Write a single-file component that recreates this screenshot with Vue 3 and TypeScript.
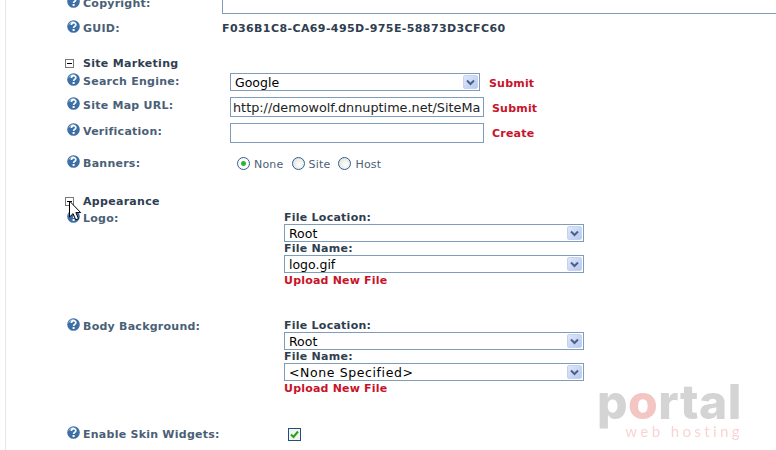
<template>
  <div class="page">
    <div class="settings">
      <div class="row row-copyright">
        <label class="label"><HelpIcon />Copyright:</label>
        <input class="text-box copyright-box" type="text" />
      </div>
      <div class="row row-guid">
        <label class="label"><HelpIcon />GUID:</label>
        <span class="guid">F036B1C8-CA69-495D-975E-58873D3CFC60</span>
      </div>

      <div class="section section-marketing">
        <span class="toggle"></span>
        <span class="section-title">Site Marketing</span>
      </div>
      <div class="row row-engine">
        <label class="label"><HelpIcon />Search Engine:</label>
        <div class="combo engine-combo">
          <select><option>Google</option></select>
          <span class="combo-arrow"><ArrowIcon /></span>
        </div>
        <a class="cmd cmd-engine">Submit</a>
      </div>
      <div class="row row-sitemap">
        <label class="label"><HelpIcon />Site Map URL:</label>
        <input class="text-box wide-box" type="text" value="http://demowolf.dnnuptime.net/SiteMap.aspx" />
        <a class="cmd">Submit</a>
      </div>
      <div class="row row-verify">
        <label class="label"><HelpIcon />Verification:</label>
        <input class="text-box wide-box" type="text" />
        <a class="cmd">Create</a>
      </div>
      <div class="row row-banners">
        <label class="label"><HelpIcon />Banners:</label>
        <div class="radios">
          <span v-for="b in banners" :key="b" class="radio-item">
            <span class="radio" :class="{ on: b === 'None' }"></span>{{ b }}
          </span>
        </div>
      </div>

      <div class="section section-appearance">
        <span class="toggle"></span>
        <span class="section-title">Appearance</span>
      </div>
      <div v-for="f in filePickers" :key="f.label" class="row file-row">
        <label class="label"><HelpIcon />{{ f.label }}</label>
        <div class="picker">
          <div class="picker-title">File Location:</div>
          <div class="combo file-combo">
            <select><option>Root</option></select>
            <span class="combo-arrow"><ArrowIcon /></span>
          </div>
          <div class="picker-title">File Name:</div>
          <div class="combo file-combo">
            <select :class="{ spaced: f.file !== 'logo.gif' }"><option>{{ f.file }}</option></select>
            <span class="combo-arrow"><ArrowIcon /></span>
          </div>
          <a class="cmd upload">Upload New File</a>
        </div>
      </div>
      <div class="row row-widgets">
        <label class="label"><HelpIcon />Enable Skin Widgets:</label>
        <span class="check">
          <svg width="9" height="9" viewBox="0 0 9 9"><path d="M1 4.5 3.5 7 8 1.5" fill="none" stroke="#21a121" stroke-width="2" /></svg>
        </span>
      </div>
    </div>

    <svg class="cursor" width="14" height="22" viewBox="0 0 14 22">
      <path d="M1.5 1v16l3.6-3.4 2.6 6.2 2.8-1.2-2.6-6h4.8z" fill="#fff" stroke="#000" stroke-width="1" />
    </svg>

    <div class="watermark">
      <div class="wm-name">p<span class="wm-o">o</span>rtal</div>
      <div class="wm-sub">web hosting</div>
    </div>
  </div>
</template>

<script setup lang="ts">
import { h } from 'vue'

const banners = ['None', 'Site', 'Host']
const filePickers = [
  { label: 'Logo:', file: 'logo.gif' },
  { label: 'Body Background:', file: '<None Specified>' }
]

// little blue help bubble in front of each label
const HelpIcon = () =>
  h('svg', { class: 'help', width: 13, height: 13, viewBox: '0 0 13 13' }, [
    h('circle', { cx: 6.5, cy: 6.5, r: 6.3, fill: '#3b6fa5' }),
    h('path', { d: 'M1.2 5.5A5.4 5.4 0 0 1 8 1.2C5 2 3 3.5 1.2 5.5z', fill: '#8fb4d8' }),
    h('path', {
      d: 'M4.4 5c0-3 4.4-3 4.4-.3 0 1.7-2.2 1.6-2.2 3.2',
      fill: 'none',
      stroke: '#fff',
      'stroke-width': 1.7
    }),
    h('rect', { x: 5.6, y: 9, width: 2, height: 2, fill: '#fff' })
  ])

const ArrowIcon = () =>
  h('svg', { width: 9, height: 7, viewBox: '0 0 9 7' }, [
    h('path', { d: 'M1 1.5 4.5 5 8 1.5', fill: 'none', stroke: '#4d6185', 'stroke-width': 2 })
  ])
</script>

<style>
html, body {
  margin: 0;
  background: #fff;
  overflow: hidden;
}
</style>

<style scoped>
.page {
  position: relative;
  width: 776px;
  height: 450px;
  overflow: hidden;
  background: #fff;
  font-family: "DejaVu Sans", Verdana, sans-serif;
  font-size: 11px;
}
.settings {
  margin-left: 5px;
  height: 452px;
  border-left: 1px solid #e4e8ee;
  padding-left: 61px;
  box-sizing: border-box;
}
.row {
  display: flex;
  align-items: flex-start;
}
.label {
  display: flex;
  align-items: center;
  gap: 3px;
  width: 163px;
  height: 14px;
  flex: none;
  color: #4a5f78;
  font-weight: bold;
  font-size: 11px;
  letter-spacing: 0.25px;
  white-space: nowrap;
}
.help {
  flex: none;
  margin-top: -3px;
}
.row-copyright {
  height: 15px;
  margin-top: -1px;
  align-items: flex-end;
}
.row-copyright .label {
  margin-bottom: 4px;
  width: 155px;
}
.copyright-box {
  width: 560px;
  height: 30px;
  flex: none;
}
.row-guid {
  margin-top: 7px;
  height: 16px;
}
.row-guid .label {
  width: 155px;
}
.guid {
  font-weight: bold;
  font-size: 11px;
  letter-spacing: 0.4px;
  color: #2f3e50;
  line-height: 15px;
}
.section {
  display: flex;
  align-items: center;
  gap: 9px;
  height: 14px;
}
.section-marketing {
  margin-top: 19px;
}
.section-appearance {
  margin-top: 23px;
}
.toggle {
  box-sizing: border-box;
  width: 9px;
  height: 9px;
  border: 1px solid #777;
  margin-left: -2px;
  background: linear-gradient(#000, #000) center / 5px 1px no-repeat;
  flex: none;
}
.section-title {
  font-weight: bold;
  font-size: 11px;
  letter-spacing: 0.3px;
  color: #2f3e50;
}
.text-box {
  box-sizing: border-box;
  border: 1px solid #7f9db9;
  font-family: inherit;
  font-size: 12.8px;
  padding: 0 2px;
  color: #222;
  background: #fff;
  outline: none;
}
.wide-box {
  width: 254px;
  height: 20px;
  flex: none;
}
.combo {
  position: relative;
  box-sizing: border-box;
  border: 1px solid #7f9db9;
  background: #fff;
  flex: none;
}
.combo select {
  appearance: none;
  display: block;
  width: 100%;
  height: 100%;
  border: 0;
  background: transparent;
  font-family: inherit;
  font-size: 12.5px;
  color: #000;
  padding: 0 0 0 4px;
  outline: none;
}
.combo select.spaced {
  letter-spacing: 0.6px;
}
.combo-arrow {
  position: absolute;
  top: 1px;
  right: 1px;
  bottom: 1px;
  width: 15px;
  display: flex;
  align-items: center;
  justify-content: center;
  background: linear-gradient(135deg, #dfe8fb, #b5c9f2);
  border: 1px solid #c6d3ee;
  border-radius: 2px;
  box-sizing: border-box;
}
.engine-combo {
  width: 250px;
  height: 18px;
}
.file-combo {
  width: 300px;
  height: 18px;
}
.cmd {
  color: #c8142a;
  font-weight: bold;
  font-size: 11px;
  letter-spacing: 0.2px;
  margin-left: 8px;
  line-height: 15px;
  margin-top: 3px;
}
.row-sitemap .cmd {
  margin-top: 4px;
}
.cmd-engine {
  margin-left: 9px;
  margin-top: 3px;
}
.row-engine {
  margin-top: 3px;
}
.row-sitemap {
  margin-top: 6px;
}
.row-verify {
  margin-top: 6px;
}
.row-engine .label,
.row-sitemap .label,
.row-verify .label {
  margin-top: 1px;
}
.row-banners {
  margin-top: 13px;
}
.radios {
  display: flex;
  gap: 8px;
  margin-left: 7px;
  color: #4a5f78;
  font-size: 11px;
  letter-spacing: 0.2px;
}
.radio-item {
  display: flex;
  align-items: center;
  gap: 4px;
  padding-top: 2px;
}
.radio {
  box-sizing: border-box;
  width: 13px;
  height: 13px;
  margin-top: -2px;
  border-radius: 50%;
  border: 1px solid #2f5f8f;
  background: radial-gradient(circle at 60% 60%, #fff, #dcdcd6);
}
.radio.on {
  background: radial-gradient(circle, #2fb52f 0 2px, #fff 3px);
}
.file-row {
  height: 105px;
  margin-top: 3px;
}
.file-row .label {
  width: 217px;
}
.picker {
  display: flex;
  flex-direction: column;
  align-items: flex-start;
}
.picker-title {
  font-weight: bold;
  font-size: 11px;
  letter-spacing: 0.25px;
  color: #2f3e50;
  line-height: 14px;
  height: 13px;
}
.upload {
  margin-left: 0;
  margin-top: 0;
  line-height: 15px;
}
.row-widgets {
  margin-top: 3px;
}
.row-widgets .label {
  width: 221px;
}
.check {
  box-sizing: border-box;
  width: 13px;
  height: 13px;
  margin-top: 1px;
  border: 1px solid #1c5180;
  background: #f4f4ee;
  display: flex;
  align-items: center;
  justify-content: center;
}
.cursor {
  position: absolute;
  left: 68px;
  top: 200px;
}
.watermark {
  position: absolute;
  left: 597px;
  top: 379px;
  width: 146px;
  filter: blur(0.6px);
}
.wm-name {
  font-family: Inter, sans-serif;
  font-weight: 800;
  font-size: 48px;
  line-height: 46px;
  letter-spacing: 0.5px;
  white-space: nowrap;
  color: #d4d4d4;
}
.wm-o {
  color: #f3c6c4;
}
.wm-sub {
  font-family: Lato, sans-serif;
  font-size: 15px;
  line-height: 13px;
  letter-spacing: 3.4px;
  color: #f8d4d4;
  text-align: right;
}
</style>
